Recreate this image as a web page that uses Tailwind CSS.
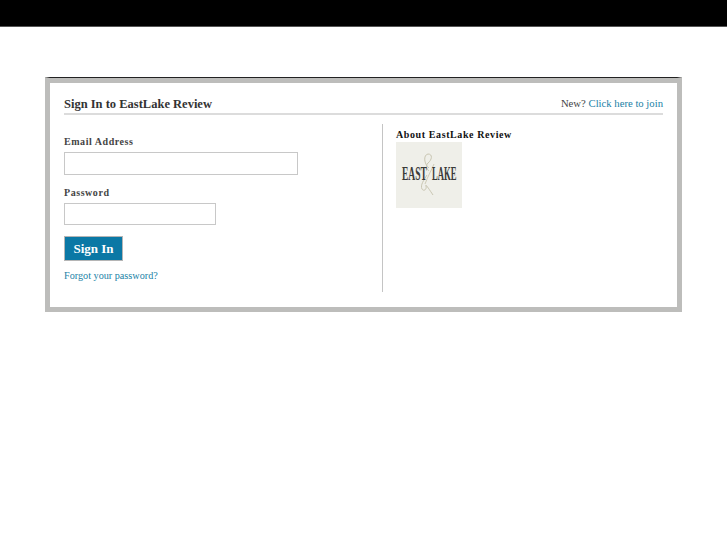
<!DOCTYPE html>
<html lang="en">
<head>
  <meta charset="UTF-8">
  <title>Sign In to EastLake Review</title>
  <script src="https://cdn.jsdelivr.net/npm/@tailwindcss/browser@4"></script>
</head>
<body class="min-h-screen bg-white font-['Liberation_Serif',serif] text-[#333]">

  <!-- top bar -->
  <div class="h-[27px] bg-black border-b border-[#555]"></div>

  <!-- sign in box -->
  <div class="mt-[50px] ml-[45px] w-[637px] h-[235px] border-t border-t-[#222] border-x-[5px] border-b-[5px] border-x-[#bdbdbb] border-b-[#bdbdbb] bg-white">
    <div class="border-t-[5px] border-[#bdbdbb] px-[14px] pt-[11px]">
      <!-- heading -->
      <div class="flex justify-between items-end h-[21px] border-b-2 border-[#dcdcdc]">
        <h1 class="text-[12.5px] leading-[18px] font-bold text-[#333]">Sign In to EastLake Review</h1>
        <p class="text-[10.7px] leading-[18px] mb-[1px] text-[#444]">New? <a href="#" class="text-[#1a7fa6]">Click here to join</a></p>
      </div>

      <div class="flex mt-[9px]">
        <!-- form -->
        <div class="w-[319px] h-[168px] border-r border-[#c4c4c4] pt-[11px]">
          <label class="block text-[10px] leading-[14px] font-bold tracking-[0.55px] text-[#444]">Email Address</label>
          <input type="text" class="block mt-[3px] w-[234px] h-[23px] border border-[#c8c8c8] bg-white">
          <label class="block mt-[11px] text-[10px] leading-[14px] font-bold tracking-[0.55px] text-[#444]">Password</label>
          <input type="password" class="block mt-[3px] w-[152px] h-[22px] border border-[#c8c8c8] bg-white">
          <button class="block mt-[11px] w-[59px] h-[25px] border border-[#b5b5b5] bg-[#0b78a5] text-white text-[13px] font-bold">Sign In</button>
          <a href="#" class="block mt-[8px] text-[10.2px] leading-[14px] text-[#1a7fa6]">Forgot your password?</a>
        </div>

        <!-- about -->
        <div class="pl-[13px] pt-[4px]">
          <h2 class="text-[10px] leading-[14px] font-bold tracking-[0.6px] text-[#111]">About EastLake Review</h2>
          <svg class="block" width="66" height="66" viewBox="0 0 66 66">
            <rect width="66" height="66" fill="#efefe9"/>
            <path d="M33 26c-5-4-6-13-1-14 5 0 4 6 0 9-3 3-1 6 1 8M31 33c-3 5-7 10-5 14 2 3 5 0 4-3-1-3 3 3 7 9" fill="none" stroke="#c9c6b2" stroke-width="1"/>
            <path d="M38 22c-2 5-6 12-9 20" fill="none" stroke="#cfccb8" stroke-width="1"/>
            <text transform="translate(6 38) scale(.53 1)" font-family="'Liberation Serif',serif" font-size="18" font-weight="700" fill="#3a3a38">EAST</text>
            <text transform="translate(36 38) scale(.48 1)" font-family="'Liberation Serif',serif" font-size="18" font-weight="700" fill="#3a3a38">LAKE</text>
          </svg>
        </div>
      </div>
    </div>
  </div>

</body>
</html>
